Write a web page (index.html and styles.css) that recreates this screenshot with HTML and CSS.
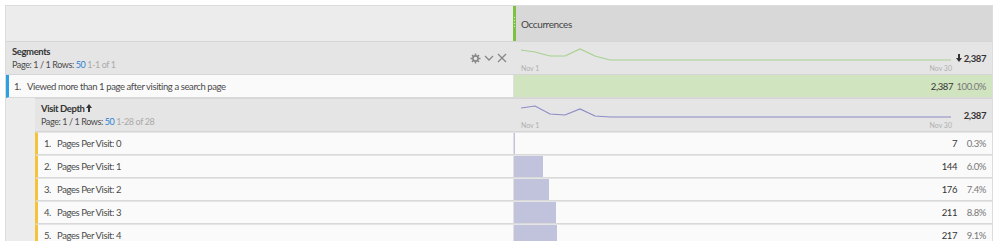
FILE: index.html
```html
<!DOCTYPE html>
<html lang="en">
<head>
    <meta charset="UTF-8">
    <title>Freeform Table</title>
    <link rel="stylesheet" href="styles.css">
</head>
<body>
    <div class="table">
        <div class="row head">
            <div class="cell-left"></div>
            <div class="cell-metric metric-title">
                <span class="grip"></span>
                <span>Occurrences</span>
            </div>
        </div>

        <div class="row dim-head">
            <div class="cell-left dim-info">
                <div>
                    <div class="dim-name">Segments</div>
                    <div class="paging">Page: 1 / 1 Rows: <span class="link">50</span> <span class="muted">1-1 of 1</span></div>
                </div>
                <div class="tools">
                    <svg width="11" height="11" viewBox="0 0 11 11"><circle cx="5.5" cy="5.5" r="2.6" fill="none" stroke="#888" stroke-width="1.6"/><path d="M5.5 0.5v2M5.5 8.5v2M0.5 5.5h2M8.5 5.5h2M2 2l1.4 1.4M7.6 7.6L9 9M2 9l1.4-1.4M7.6 3.4L9 2" stroke="#888" stroke-width="1.4"/></svg>
                    <svg width="10" height="10" viewBox="0 0 10 10"><path d="M1 3l4 4 4-4" fill="none" stroke="#888" stroke-width="1.3"/></svg>
                    <svg width="10" height="10" viewBox="0 0 10 10"><path d="M1 1l8 8M9 1l-8 8" stroke="#888" stroke-width="1.3"/></svg>
                </div>
            </div>
            <div class="cell-metric spark">
                <div class="spark-chart">
                    <svg width="431" height="16" viewBox="0 0 431 16"><polyline points="0,3 14,5 29,9 44,9 59,2 74,9 89,13 430,13" fill="none" stroke="#a7d18f" stroke-width="1.2"/></svg>
                    <div class="spark-dates"><span>Nov 1</span><span>Nov 30</span></div>
                </div>
                <div class="total"><svg width="6" height="8" viewBox="0 0 6 8"><path d="M2 0h2v4h2L3 8 0 4h2z" fill="#333"/></svg> 2,387</div>
            </div>
        </div>

        <div class="row item seg-item">
            <div class="cell-left"><span class="num">1.</span>Viewed more than 1 page after visiting a search page</div>
            <div class="cell-metric value-cell green">
                <span class="count">2,387</span><span class="pct">100.0%</span>
            </div>
        </div>

        <div class="nested">
            <div class="row dim-head">
                <div class="cell-left dim-info">
                    <div>
                        <div class="dim-name">Visit Depth <svg width="6" height="8" viewBox="0 0 6 8"><path d="M2 8h2V4h2L3 0 0 4h2z" fill="#333"/></svg></div>
                        <div class="paging">Page: 1 / 1 Rows: <span class="link">50</span> <span class="muted">1-28 of 28</span></div>
                    </div>
                </div>
                <div class="cell-metric spark">
                    <div class="spark-chart">
                        <svg width="431" height="16" viewBox="0 0 431 16"><polyline points="0,4 14,2 29,10 44,11 59,5 74,12 89,13 430,13" fill="none" stroke="#8c8cc6" stroke-width="1.2"/></svg>
                        <div class="spark-dates"><span>Nov 1</span><span>Nov 30</span></div>
                    </div>
                    <div class="total">2,387</div>
                </div>
            </div>

            <div class="row item sub-item">
                <div class="cell-left"><span class="num">1.</span>Pages Per Visit: 0</div>
                <div class="cell-metric value-cell">
                    <div class="bar" style="width: 1px"></div>
                    <span class="count">7</span><span class="pct">0.3%</span>
                </div>
            </div>
            <div class="row item sub-item">
                <div class="cell-left"><span class="num">2.</span>Pages Per Visit: 1</div>
                <div class="cell-metric value-cell">
                    <div class="bar" style="width: 29px"></div>
                    <span class="count">144</span><span class="pct">6.0%</span>
                </div>
            </div>
            <div class="row item sub-item">
                <div class="cell-left"><span class="num">3.</span>Pages Per Visit: 2</div>
                <div class="cell-metric value-cell">
                    <div class="bar" style="width: 35px"></div>
                    <span class="count">176</span><span class="pct">7.4%</span>
                </div>
            </div>
            <div class="row item sub-item">
                <div class="cell-left"><span class="num">4.</span>Pages Per Visit: 3</div>
                <div class="cell-metric value-cell">
                    <div class="bar" style="width: 42px"></div>
                    <span class="count">211</span><span class="pct">8.8%</span>
                </div>
            </div>
            <div class="row item sub-item">
                <div class="cell-left"><span class="num">5.</span>Pages Per Visit: 4</div>
                <div class="cell-metric value-cell">
                    <div class="bar" style="width: 43px"></div>
                    <span class="count">217</span><span class="pct">9.1%</span>
                </div>
            </div>
        </div>
    </div>
</body>
</html>
```

FILE: styles.css
```css
body {
    margin: 5px;
    background-color: #ffffff;
    font-family: Lato, Arial, sans-serif;
    font-size: 9.5px;
    letter-spacing: -0.4px;
    color: #4b4b4b;
}

.table {
    width: 988px;
    border: 1px solid #dcdcdc;
    border-bottom: none;
    box-sizing: border-box;
    background-color: #ececec;
}

.row {
    display: flex;
}

.cell-left {
    flex: 1;
    min-width: 0;
    box-sizing: border-box;
}

.cell-metric {
    width: 479px;
    box-sizing: border-box;
    position: relative;
}

/* Column header */
.head {
    height: 35px;
}

.head .cell-left {
    background-color: #ececec;
}

.metric-title {
    background-color: #d8d8d8;
    display: flex;
    align-items: center;
    padding-left: 8px;
    font-size: 10px;
    color: #444;
}

.grip {
    position: absolute;
    left: 0;
    top: 0;
    bottom: 0;
    width: 3px;
    background-color: #7dc143;
}

.grip::after {
    content: "";
    position: absolute;
    left: 1px;
    top: 11px;
    height: 12px;
    width: 1px;
    background: repeating-linear-gradient(#d8eec8 0 1px, transparent 1px 3px);
}

/* Dimension header */
.dim-head {
    height: 34px;
    background-color: #e5e5e5;
    border-top: 1px solid #d6d6d6;
    border-bottom: 1px solid #d6d6d6;
    box-sizing: border-box;
}

.dim-info {
    display: flex;
    justify-content: space-between;
    align-items: center;
    padding: 0 6px 0 6px;
}

.dim-name {
    font-weight: bold;
    color: #333;
    line-height: 13px;
}

.paging {
    font-size: 9px;
    line-height: 13px;
    color: #4b4b4b;
}

.link {
    color: #2d7fd3;
}

.muted {
    color: #aaa;
}

.tools {
    display: flex;
    gap: 3px;
    align-items: center;
}

.spark {
    display: flex;
    align-items: center;
    padding-left: 8px;
    padding-right: 6px;
}

.spark-chart {
    width: 431px;
    position: relative;
    top: 1px;
}

.spark-chart svg {
    display: block;
}

.spark-dates {
    display: flex;
    justify-content: space-between;
    font-size: 7px;
    letter-spacing: 0;
    color: #b0b0b0;
    margin-top: 1px;
}

.total {
    flex: 1;
    text-align: right;
    font-weight: bold;
    color: #333;
}

/* Item rows */
.item {
    height: 23px;
    background-color: #fafafa;
    border-bottom: 1px solid #d9d9d9;
    box-sizing: border-box;
}

.item .cell-left {
    display: flex;
    align-items: center;
}

.num {
    flex: none;
    width: 13px;
}

.seg-item {
    border-left: 3px solid #2da0df;
}

.seg-item .cell-left {
    padding-left: 5px;
}

.value-cell {
    display: flex;
    align-items: center;
    justify-content: flex-end;
    padding-right: 6px;
    border-left: 1px solid #e0e0e0;
    background-color: #fafafa;
}

.green {
    background-color: #d1e4c0;
}

.count {
    position: relative;
    color: #333;
}

.pct {
    position: relative;
    width: 29px;
    text-align: right;
    color: #777;
}

.green .pct {
    width: 33px;
}

.bar {
    position: absolute;
    left: 0;
    top: 0;
    bottom: 0;
    background-color: #c1c2dc;
}

.nested {
    margin-left: 29px;
}

.sub-item {
    border-left: 3px solid #f5c33b;
    border-top: 1px solid #e5e5e5;
}

.sub-item .cell-left {
    padding-left: 6px;
}
```
